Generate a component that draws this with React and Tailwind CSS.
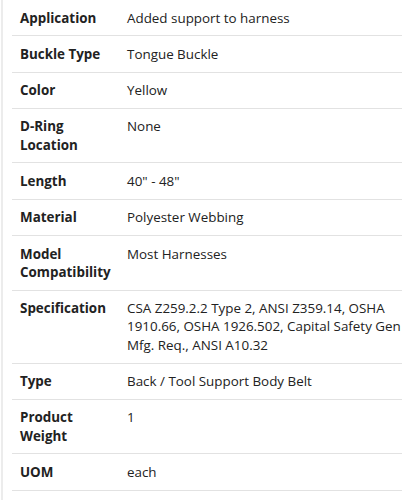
const rows = [
  ["Application", "Added support to harness"],
  ["Buckle Type", "Tongue Buckle"],
  ["Color", "Yellow"],
  ["D-Ring Location", "None"],
  ["Length", "40\" - 48\""],
  ["Material", "Polyester Webbing"],
  ["Model Compatibility", "Most Harnesses"],
  ["Specification", "CSA Z259.2.2 Type 2, ANSI Z359.14, OSHA 1910.66, OSHA 1926.502, Capital Safety Gen Mfg. Req., ANSI A10.32"],
  ["Type", "Back / Tool Support Body Belt"],
  ["Product Weight", "1"],
  ["UOM", "each"],
];

export default function App() {
  return (
    <div
      className="w-[402px] h-[500px] overflow-hidden bg-white text-[#222] flex"
      style={{ fontFamily: '"Open Sans", sans-serif' }}
    >
      <div className="w-[3px] shrink-0 border-l-2 border-[#ececec] ml-[1px]" />
      <div className="pl-[8px] shrink-0">
        {rows.map(([k, v]) => (
          <div key={k} className="flex border-b border-[#e2e2e2] py-[8.5px] text-[13.4px] leading-[18.3px]">
            <div className="w-[115px] shrink-0 pl-[8px] pr-[6px] font-bold">{k}</div>
            <div className="w-[285px] shrink-0">{v}</div>
          </div>
        ))}
      </div>
    </div>
  );
}
